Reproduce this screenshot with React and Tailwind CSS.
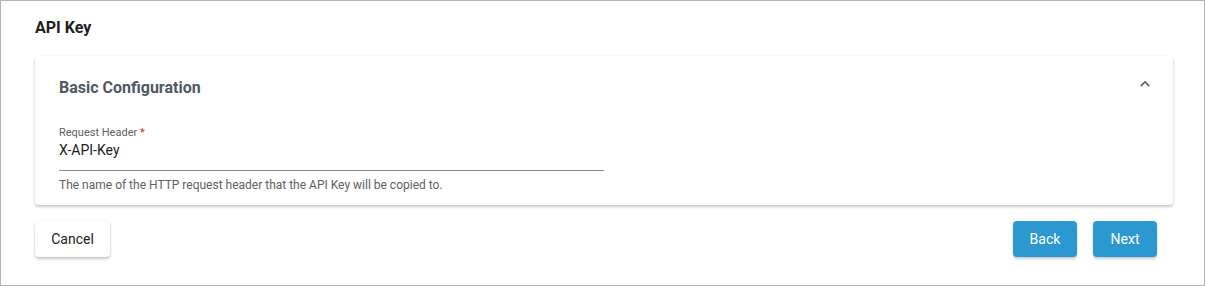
import React from "react";

export default function App() {
  return (
    <div className="w-[1205px] h-[286px] border border-[#b4b4b4] bg-white font-['Roboto',sans-serif] pl-[34px] pr-[31px] pt-[15px]">
      <h1 className="text-[16px] leading-[24px] font-bold text-[#212121]">API Key</h1>
      <div className="mt-[16px] rounded-[4px] bg-white shadow-[0_2px_3px_rgba(0,0,0,0.2),0_0_2px_rgba(0,0,0,0.08)]">
        <div className="h-[64px] flex items-center justify-between pl-6 pr-[16px]">
          <span className="text-[16px] font-bold text-[#4f5964]">Basic Configuration</span>
          <svg width="24" height="24" viewBox="0 0 24 24" className="-mt-[8px]">
            <path d="M7.41 15.41 12 10.83l4.59 4.58L18 14l-6-6-6 6z" fill="#5f5f5f" transform="translate(12 12) scale(0.8) translate(-12 -12)" />
          </svg>
        </div>
        <div className="pl-6 pt-[6px] pb-[12px]">
          <div className="w-[545px]">
            <div className="text-[11px] leading-[14px] text-[#616161]">
              Request Header <span className="text-[#d32f2f]">*</span>
            </div>
            <div className="text-[14px] leading-[20px] text-[#212121] pb-[10px] border-b border-[#8a8a8a]">X-API-Key</div>
          </div>
          <div className="mt-[6px] text-[12px] leading-[16px] text-[#616161]">
            The name of the HTTP request header that the API Key will be copied to.
          </div>
        </div>
      </div>
      <div className="mt-[16px] flex items-center justify-between pr-[16px]">
        <button className="h-[36px] w-[75px] rounded-[4px] bg-white text-[14px] text-[#212121] shadow-[0_2px_3px_rgba(0,0,0,0.22),0_0_2px_rgba(0,0,0,0.08)]">
          Cancel
        </button>
        <div className="flex gap-4">
          <button className="h-[36px] w-[64px] rounded-[4px] bg-[#2b98cf] text-[14px] text-white shadow-[0_2px_3px_rgba(0,0,0,0.22)]">
            Back
          </button>
          <button className="h-[36px] w-[64px] rounded-[4px] bg-[#2b98cf] text-[14px] text-white shadow-[0_2px_3px_rgba(0,0,0,0.22)]">
            Next
          </button>
        </div>
      </div>
    </div>
  );
}
